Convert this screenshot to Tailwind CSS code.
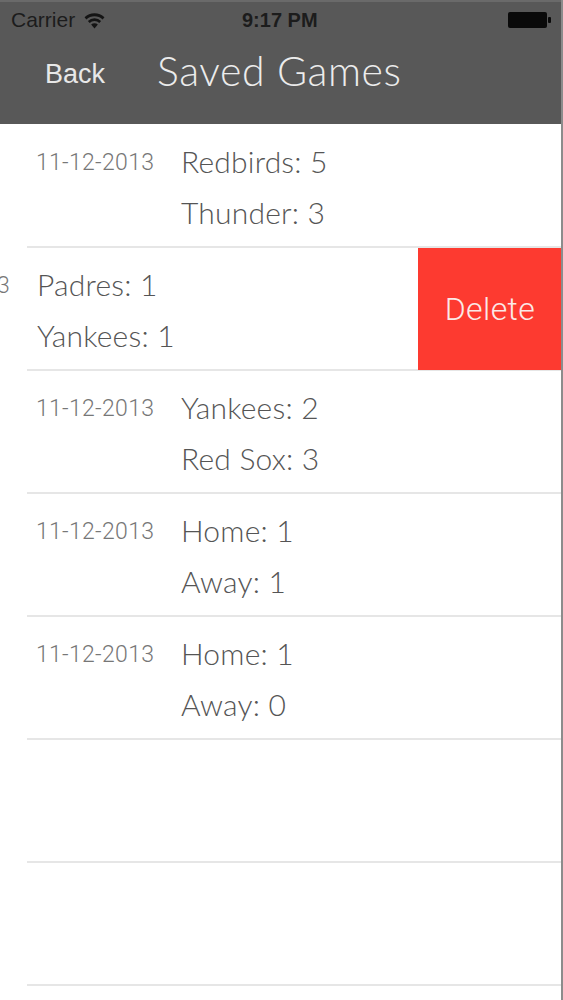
<!DOCTYPE html>
<html lang="en">
<head>
    <meta charset="UTF-8">
    <title>Saved Games</title>
    <script src="https://cdn.jsdelivr.net/npm/@tailwindcss/browser@4"></script>
</head>
<body class="bg-white">
    <div class="w-[563px] h-[1000px] overflow-hidden relative font-['Lato',sans-serif]">
        <!-- Header -->
        <header class="h-[124px] bg-[#585858] border-t-2 border-[#6a6a6a] flex flex-col">
            <div class="h-[36px] flex items-center justify-between pl-[11px] pr-[11px] relative font-['Liberation_Sans',sans-serif] text-[#1c1c1c]">
                <div class="flex items-center gap-[9px]">
                    <span class="text-[21px]">Carrier</span>
                    <svg width="21" height="17" viewBox="0 0 20 15" fill="#141414"><path d="M10 15 6.8 11.4a4.6 4.6 0 0 1 6.4 0z"/><path d="M5.4 9.9 3.7 8a9 9 0 0 1 12.6 0l-1.7 1.9a6.6 6.6 0 0 0-9.2 0z"/><path d="M2.3 6.5.5 4.5a13.6 13.6 0 0 1 19 0l-1.8 2a11 11 0 0 0-15.4 0z"/></svg>
                </div>
                <span class="absolute left-[242px] top-[7px] text-[20px] font-bold leading-[22px]">9:17 PM</span>
                <svg width="44" height="18" viewBox="0 0 44 18" fill="#0a0a0a"><rect x="0" y="1" width="39" height="16" rx="2"/><rect x="40" y="6" width="3" height="6" rx="1"/></svg>
            </div>
            <div class="flex items-center h-[72px]">
                <span class="ml-[45px] text-[#e8e8e8] text-[27px] font-['Liberation_Sans',sans-serif]">Back</span>
                <span class="ml-[52px] mb-[6px] text-[#ececec] text-[41px] font-light tracking-[0.6px]">Saved Games</span>
            </div>
        </header>

        <!-- Rows -->
        <main class="pt-[1px] text-[#555555] text-[30px] font-light tracking-[0.2px]">
            <div class="h-[123px] ml-[27px] border-b-2 border-[#e6e6e6] flex">
                <span class="w-[154px] pl-[9px] pt-[23px] text-[23px] leading-[30px] text-[#777777] font-['Roboto',sans-serif] tracking-[0.3px]">11-12-2013</span>
                <div class="pt-[11px] leading-[51px]"><p>Redbirds: 5</p><p>Thunder: 3</p></div>
            </div>
            <div class="h-[123px] flex relative">
                <span class="-ml-[3px] w-[12px] pt-[23px] text-[23px] leading-[30px] text-[#777777] font-['Roboto',sans-serif] text-right">3</span>
                <div class="ml-[28px] pt-[11px] leading-[51px]"><p>Padres: 1</p><p>Yankees: 1</p></div>
                <div class="absolute left-[27px] right-0 bottom-0 border-b-2 border-[#e6e6e6]"></div>
                <div class="absolute left-[418px] right-0 top-0 h-[122px] bg-[#fd3a30] text-[#fbe9e7] text-[32px] tracking-[0.4px] font-['Roboto',sans-serif] flex items-center justify-center pr-[1px]">Delete</div>
            </div>
            <div class="h-[123px] ml-[27px] border-b-2 border-[#e6e6e6] flex">
                <span class="w-[154px] pl-[9px] pt-[23px] text-[23px] leading-[30px] text-[#777777] font-['Roboto',sans-serif] tracking-[0.3px]">11-12-2013</span>
                <div class="pt-[11px] leading-[51px]"><p>Yankees: 2</p><p>Red Sox: 3</p></div>
            </div>
            <div class="h-[123px] ml-[27px] border-b-2 border-[#e6e6e6] flex">
                <span class="w-[154px] pl-[9px] pt-[23px] text-[23px] leading-[30px] text-[#777777] font-['Roboto',sans-serif] tracking-[0.3px]">11-12-2013</span>
                <div class="pt-[11px] leading-[51px]"><p>Home: 1</p><p>Away: 1</p></div>
            </div>
            <div class="h-[123px] ml-[27px] border-b-2 border-[#e6e6e6] flex">
                <span class="w-[154px] pl-[9px] pt-[23px] text-[23px] leading-[30px] text-[#777777] font-['Roboto',sans-serif] tracking-[0.3px]">11-12-2013</span>
                <div class="pt-[11px] leading-[51px]"><p>Home: 1</p><p>Away: 0</p></div>
            </div>
            <div class="h-[123px] ml-[27px] border-b-2 border-[#e6e6e6]"></div>
            <div class="h-[123px] ml-[27px] border-b-2 border-[#e6e6e6]"></div>
        </main>

        <!-- grey edge of the screen capture -->
        <div class="absolute top-0 right-0 w-[2px] h-full bg-[#8c8c8c]"></div>
    </div>
</body>
</html>
